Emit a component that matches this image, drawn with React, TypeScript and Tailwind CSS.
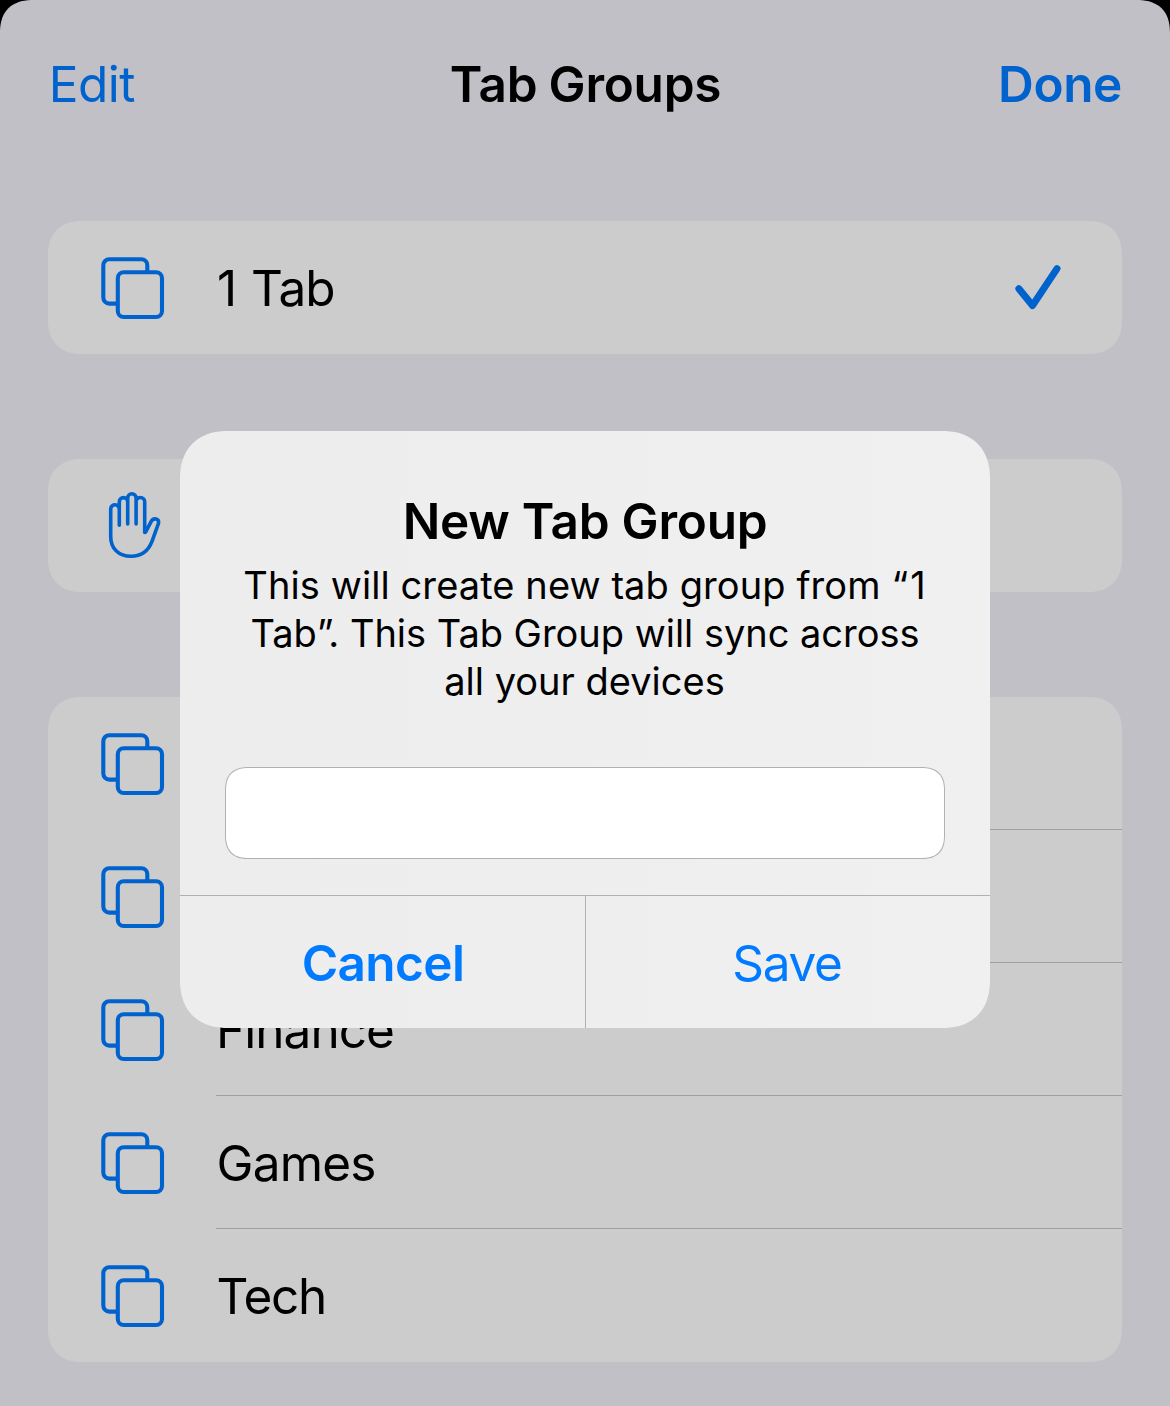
import type { ReactNode } from 'react';

const TabsIcon = () => (
  <svg width="64" height="64" viewBox="0 0 64 64" fill="none" stroke="#0062cc" strokeWidth="4.1" className="shrink-0">
    <path d="M46.3 14V8.2a6 6 0 0 0-6-6H8.3a6 6 0 0 0-6 6v32.4a6 6 0 0 0 6 6H15" />
    <rect x="16.8" y="15.3" width="44.2" height="44.7" rx="6" />
  </svg>
);

const HandIcon = () => (
  <svg
    width="52"
    height="66"
    viewBox="0 0 52 66"
    fill="none"
    stroke="#0062cc"
    strokeWidth="3.6"
    strokeLinecap="round"
    strokeLinejoin="round"
    className="-mt-[3px] ml-[7.5px] shrink-0 overflow-visible"
  >
    <path d="M10.3 33.2V9.8a4.2 4.2 0 0 1 8.4 0V32V6a4.2 4.2 0 0 1 8.4 0V32V9.8a4.3 4.3 0 0 1 8.6 0V40.4L36.6 40.2L42.2 29.4C44.6 25.2 50.6 26.6 49.4 31.6L43 49.4C39.4 58.8 32.6 64.2 22.2 64.2C9.2 64.2 1.7 56.2 1.7 44.4V17.4a4.3 4.3 0 0 1 8.6-.6" />
  </svg>
);

const CheckIcon = () => (
  <svg
    width="46"
    height="46"
    viewBox="0 0 46 46"
    fill="none"
    stroke="#0062cc"
    strokeWidth="7"
    strokeLinecap="round"
    strokeLinejoin="round"
    className="shrink-0"
  >
    <path d="M3.9 24.7L17.5 41.5L42 4.6" />
  </svg>
);

function Card({ children }: { children: ReactNode }) {
  return (
    <section className="overflow-hidden rounded-[34px] bg-[#cccccc] [corner-shape:superellipse(1.2)]">{children}</section>
  );
}

function Row({
  icon,
  label,
  tracking = '',
  divider = false,
  checked = false,
}: {
  icon: ReactNode;
  label?: string;
  tracking?: string;
  divider?: boolean;
  checked?: boolean;
}) {
  return (
    <div className="flex h-[133px]">
      <div className="flex w-[168px] shrink-0 items-start pt-9 pl-[53px]">{icon}</div>
      <div className={`flex grow items-center border-b pr-[61px] ${divider ? 'border-[#a0a0a2]' : 'border-transparent'}`}>
        <span className={`grow pt-px leading-[66px] ${tracking}`}>{label}</span>
        {checked && <CheckIcon />}
      </div>
    </div>
  );
}

const groups = [
  { label: '', tracking: '' },
  { label: '', tracking: '' },
  { label: 'Finance', tracking: 'tracking-[-0.96px]' },
  { label: 'Games', tracking: 'pl-[0.5px] tracking-[-0.79px]' },
  { label: 'Tech', tracking: 'pl-[0.5px] tracking-[-1.2px]' },
];

export default function App() {
  return (
    <div className="relative h-[1406px] w-[1170px] overflow-hidden bg-black font-['Inter',sans-serif] text-[49.5px] text-black">
      <main className="h-full rounded-t-[34px] bg-[#c1c0c6] px-12 [corner-shape:superellipse(1.3)]">
        <header className="grid h-[168px] grid-cols-3 items-center leading-[60px] text-[#0062cc]">
          <button className="pl-[0.7px] text-left tracking-[-0.5px]">Edit</button>
          <h1 className="pl-px text-center font-semibold tracking-[-0.25px] whitespace-nowrap text-black [word-spacing:-1px]">
            Tab Groups
          </h1>
          <button className="text-right font-semibold tracking-[-0.39px]">Done</button>
        </header>
        <div className="flex flex-col gap-[105px] pt-[53px]">
          <Card>
            <Row icon={<TabsIcon />} label="1 Tab" tracking="pl-px tracking-[-1px] [word-spacing:2px]" checked />
          </Card>
          <Card>
            <Row icon={<HandIcon />} />
          </Card>
          <Card>
            {groups.map((g, i) => (
              <Row key={i} icon={<TabsIcon />} label={g.label} tracking={g.tracking} divider={i < groups.length - 1} />
            ))}
          </Card>
        </div>
      </main>

      <div className="absolute inset-x-0 top-[431px] flex justify-center">
        <div
          role="dialog"
          className="w-[810px] overflow-hidden rounded-[48px] bg-linear-to-r from-[#ededee] to-[#f0f0f0] pt-[60px] [corner-shape:superellipse(1.2)]"
        >
          <h2 className="text-center leading-[60px] font-semibold tracking-[-0.25px]">New Tab Group</h2>
          <p className="mt-2.5 text-center text-[38px] leading-[48px]">
            <span className="block pr-px tracking-[0.09px]">
              This will create new tab group from <span className="tracking-[2px]">“</span>1
            </span>
            <span className="block tracking-[-0.03px]">
              Tab<span className="tracking-[-5.2px]">”</span>. This Tab Group will sync across
            </span>
            <span className="block pr-px">all your devices</span>
          </p>
          <div className="px-[45px] pt-[62px] pb-9">
            <input
              aria-label="Name"
              className="block h-[92px] w-full rounded-[24px] border border-[#b1b1b3] bg-white px-6 outline-none [corner-shape:superellipse(1.32)]"
            />
          </div>
          <div className="flex h-[133px] border-t border-[#b1b1b3] leading-[60px] text-[#007aff]">
            <button className="w-[406px] border-r border-[#b1b1b3] pt-px pl-px font-semibold tracking-[-0.6px]">Cancel</button>
            <button className="grow pt-px pr-0.5 tracking-[-1.3px]">Save</button>
          </div>
        </div>
      </div>
    </div>
  );
}
